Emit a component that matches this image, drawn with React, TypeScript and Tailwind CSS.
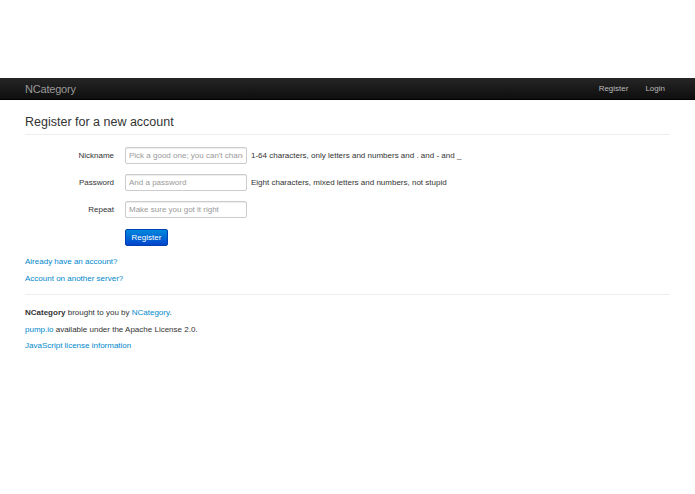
export default function App() {
  const rows = [
    { label: 'Nickname', placeholder: "Pick a good one; you can't change it", help: '1-64 characters, only letters and numbers and . and - and _' },
    { label: 'Password', placeholder: 'And a password', help: 'Eight characters, mixed letters and numbers, not stupid' },
    { label: 'Repeat', placeholder: 'Make sure you got it right', help: '' },
  ];

  return (
    <div className="min-h-[494px] bg-white text-[8px] leading-[12px] text-[#333] font-['Liberation_Sans',Arial,sans-serif]">
      <div className="h-[78px]" />
      <div className="h-[22px] flex items-center justify-between px-[25px] bg-gradient-to-b from-[#262626] to-[#0e0e0e] border-b border-[#000]">
        <span className="text-[11px] text-[#999] tracking-[-0.2px]">NCategory</span>
        <div className="flex gap-[17px] text-[8px] text-[#bbb] pr-[5px]">
          <span>Register</span>
          <span>Login</span>
        </div>
      </div>

      <div className="px-[25px]">
        <div className="pt-[14px] pb-[4px] border-b border-[#eee]">
          <h1 className="text-[12.5px] leading-[16px] text-[#333]">Register for a new account</h1>
        </div>

        <div className="pt-[12px] flex flex-col gap-[10px]">
          {rows.map((r) => (
            <div key={r.label} className="flex items-center h-[17px]">
              <label className="w-[89px] text-right text-[#333]">{r.label}</label>
              <input
                className="ml-[11px] w-[122px] h-[17px] border border-[#ccc] rounded-[2px] px-[3px] text-[8px] placeholder:text-[#999] outline-none shadow-[inset_0_1px_1px_rgba(0,0,0,0.075)]"
                placeholder={r.placeholder}
                readOnly
              />
              {r.help && <span className="ml-[4px] text-[#333]">{r.help}</span>}
            </div>
          ))}
          <div className="flex pl-[100px] pt-[1px]">
            <button className="w-[43px] h-[17px] rounded-[2px] text-white text-[8px] bg-gradient-to-b from-[#0088dd] to-[#0044cc] border border-[#0040b0]">
              Register
            </button>
          </div>
        </div>

        <div className="pt-[10px] flex flex-col gap-[5px] text-[#0088cc]">
          <span>Already have an account?</span>
          <span>Account on another server?</span>
        </div>

        <div className="mt-[9px] border-t border-[#eee] pt-[12px] flex flex-col gap-[4.5px]">
          <span>
            <b>NCategory</b> brought to you by <span className="text-[#0088cc]">NCategory</span>.
          </span>
          <span>
            <span className="text-[#0088cc]">pump.io</span> available under the Apache License 2.0.
          </span>
          <span className="text-[#0088cc]">JavaScript license information</span>
        </div>
      </div>
    </div>
  );
}
